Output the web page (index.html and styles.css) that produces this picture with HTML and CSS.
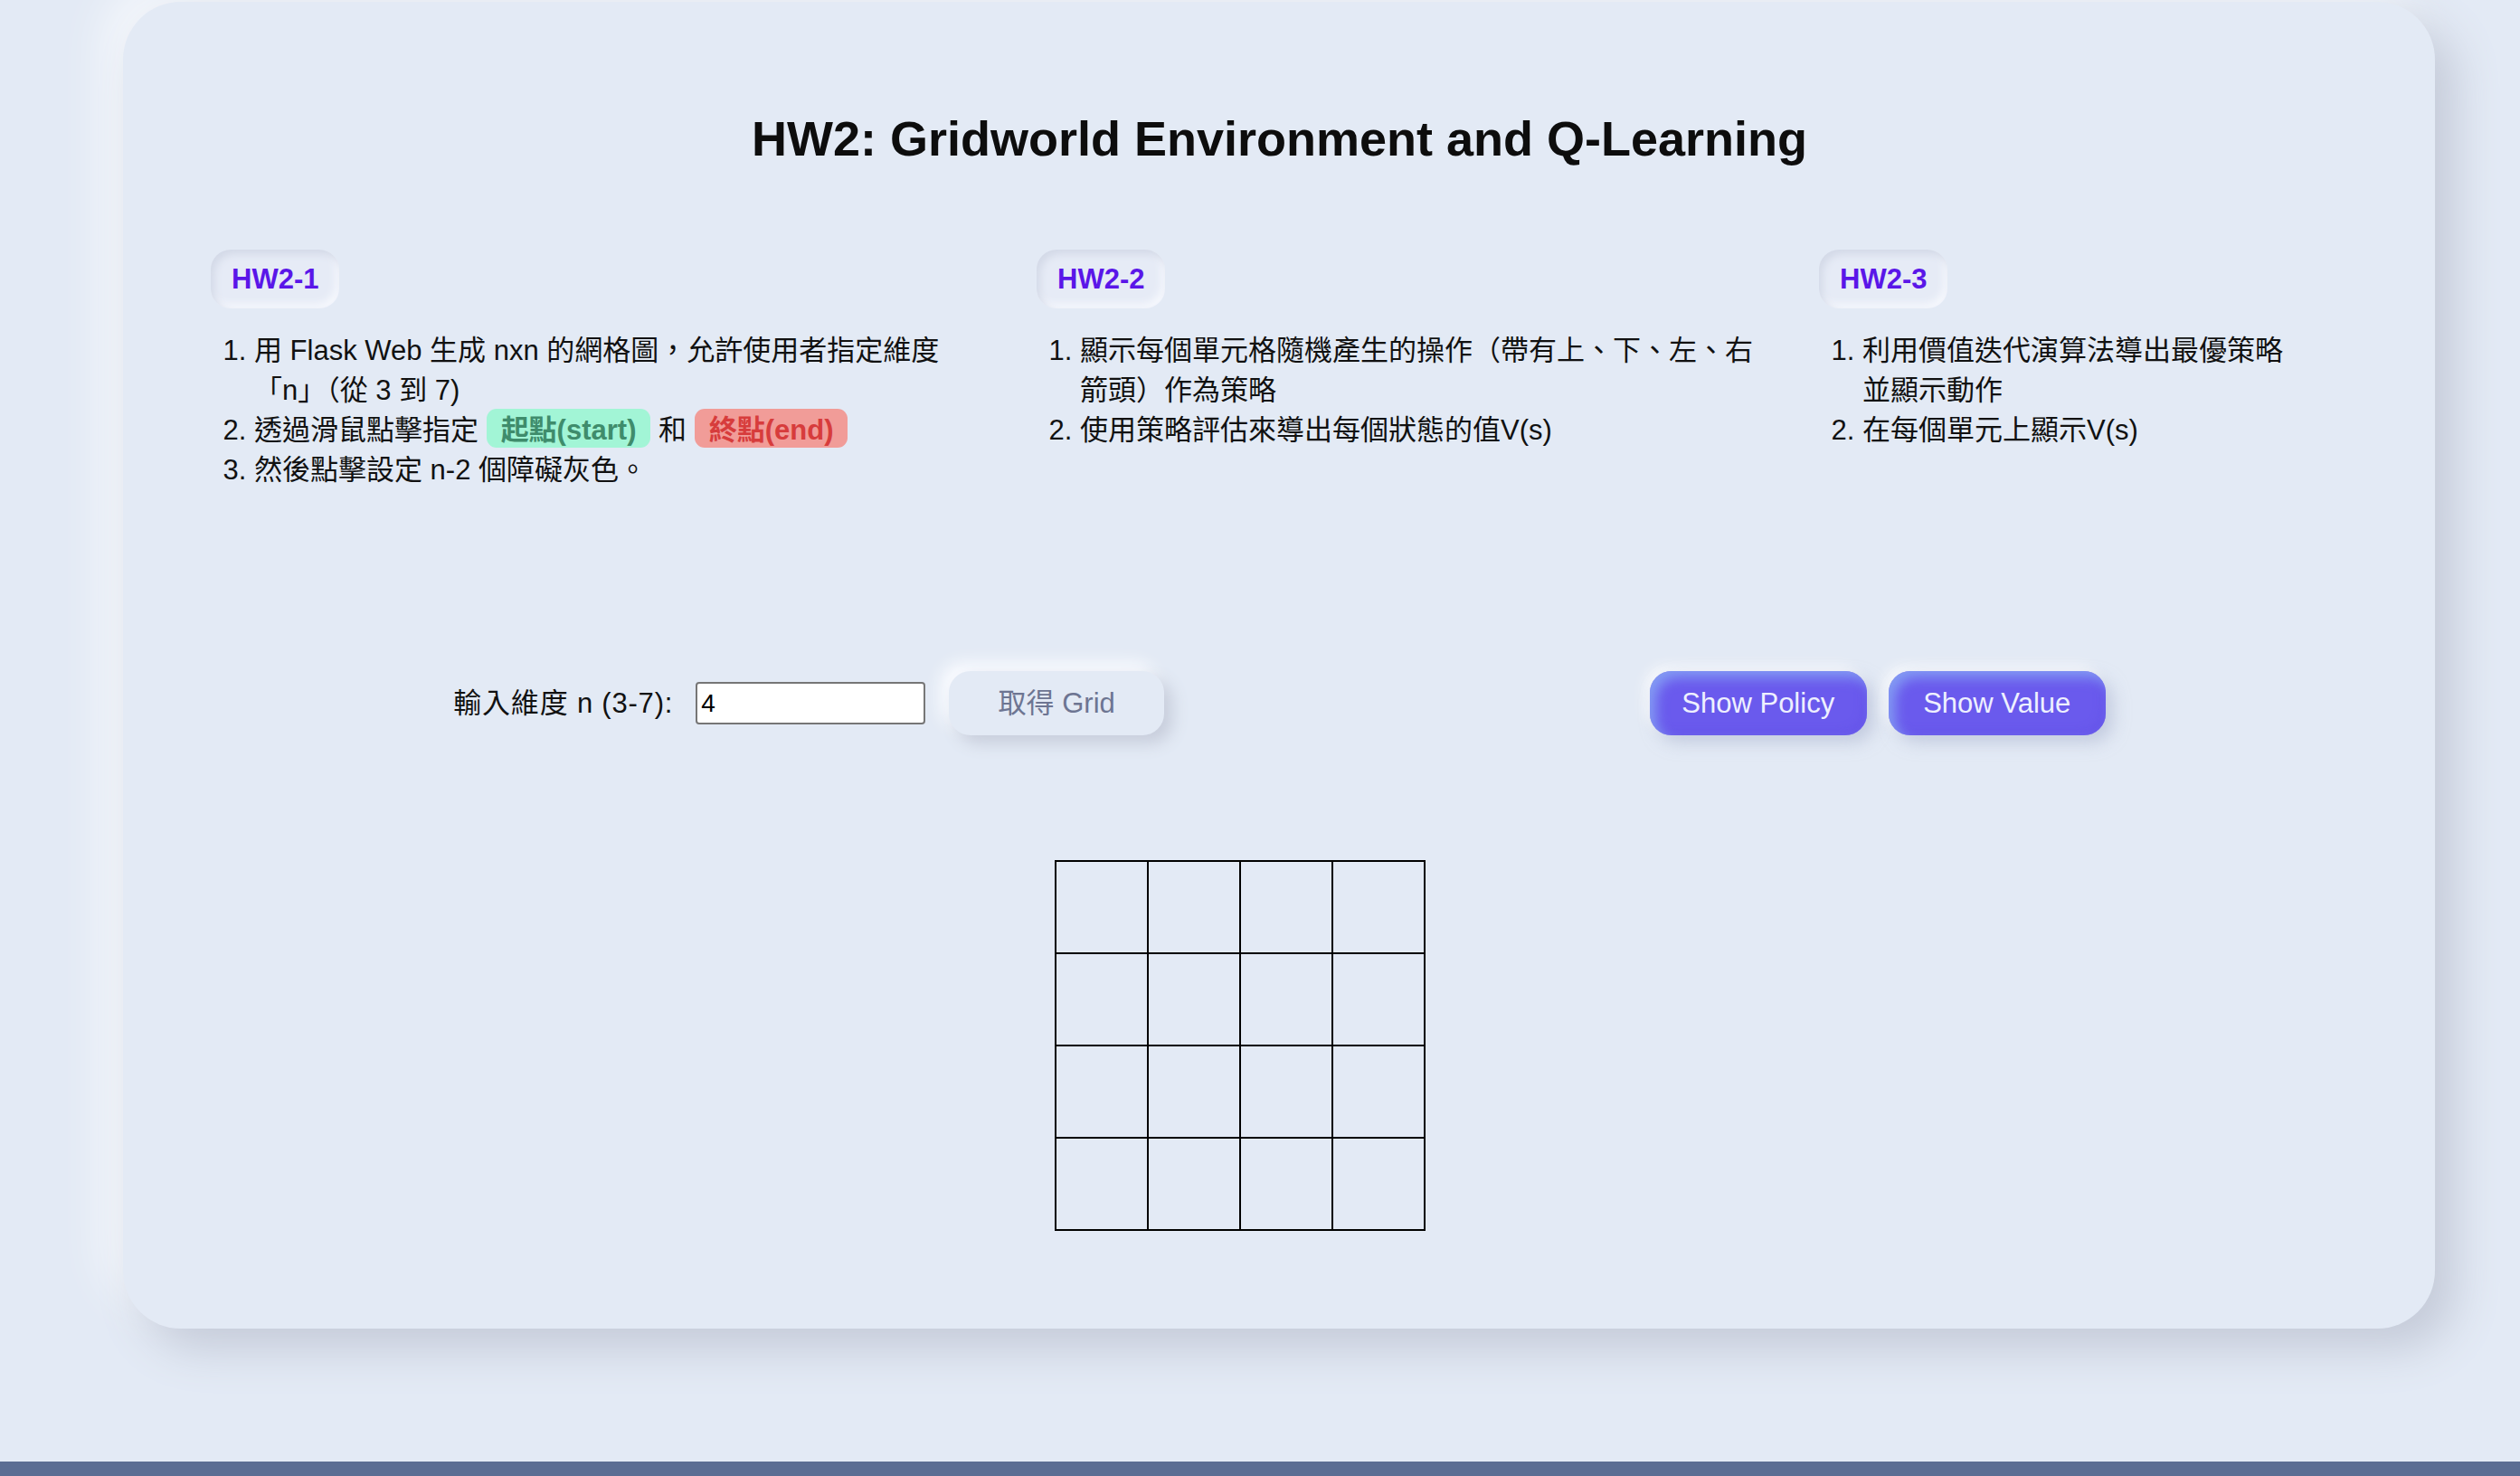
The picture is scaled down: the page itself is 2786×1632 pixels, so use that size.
FILE: index.html
```html
<!DOCTYPE html>
<html lang="zh-Hant">
<head>
<meta charset="utf-8">
<title>HW2: Gridworld Environment and Q-Learning</title>
<link rel="stylesheet" href="styles.css">
</head>
<body>
<main class="card">
  <h1 class="title">HW2: Gridworld Environment and Q-Learning</h1>
  <div class="sections">
    <section class="sec">
      <span class="badge">HW2-1</span>
      <ol class="steps">
        <li>用 Flask Web 生成 nxn 的網格圖，允許使用者指定維度「n」（從 3 到 7)</li>
        <li>透過滑鼠點擊指定 <span class="tag tag-start">起點(start)</span> 和 <span class="tag tag-end">終點(end)</span></li>
        <li>然後點擊設定 n-2 個障礙灰色。</li>
      </ol>
    </section>
    <section class="sec">
      <span class="badge">HW2-2</span>
      <ol class="steps">
        <li>顯示每個單元格隨機產生的操作（帶有上、下、左、右箭頭）作為策略</li>
        <li>使用策略評估來導出每個狀態的值V(s)</li>
      </ol>
    </section>
    <section class="sec">
      <span class="badge">HW2-3</span>
      <ol class="steps">
        <li>利用價值迭代演算法導出最優策略並顯示動作</li>
        <li>在每個單元上顯示V(s)</li>
      </ol>
    </section>
  </div>
  <div class="controls">
    <div class="group">
      <label class="dim-label" for="dim">輸入維度 n (3-7):</label>
      <input class="dim-input" id="dim" type="text" value="4">
      <button class="btn-soft" type="button">取得 Grid</button>
    </div>
    <div class="group group-actions">
      <button class="btn-primary" type="button">Show Policy</button>
      <button class="btn-primary" type="button">Show Value</button>
    </div>
  </div>
  <div class="grid-wrap">
    <div class="grid">
      <div class="cell"></div><div class="cell"></div><div class="cell"></div><div class="cell"></div>
      <div class="cell"></div><div class="cell"></div><div class="cell"></div><div class="cell"></div>
      <div class="cell"></div><div class="cell"></div><div class="cell"></div><div class="cell"></div>
      <div class="cell"></div><div class="cell"></div><div class="cell"></div><div class="cell"></div>
    </div>
  </div>
</main>
</body>
</html>
```
FILE: styles.css
```css
html {
  background: #5b6d93;
}

body {
  margin: 0;
  height: 1616px;
  background: #e3eaf5;
  font-family: "Liberation Sans", "Noto Sans CJK TC", sans-serif;
  font-size: 31px;
  line-height: 44px;
  color: #111;
}

.card {
  box-sizing: border-box;
  width: 2556px;
  margin: 2px 0 0 136px;
  padding: 119px 96px 108px 97px;
  background: #e3eaf5;
  border-radius: 64px;
  box-shadow: 22px 22px 50px #c4cad8, -22px -22px 50px rgba(255, 255, 255, 0.65);
}

.title {
  margin: 0;
  text-align: center;
  font-size: 54px;
  line-height: 64px;
  font-weight: 700;
  color: #0d0d0d;
}

.sections {
  margin-top: 91px;
  display: grid;
  grid-template-columns: 865px 817px 528px;
  column-gap: 48px;
  align-items: start;
}

.badge {
  display: inline-block;
  padding: 15px 23px;
  line-height: 35px;
  font-size: 31px;
  font-weight: 700;
  color: #5a16e8;
  border-radius: 22px;
  background: #e6ebf6;
  box-shadow: inset 4px 5px 9px #d3d9e7, inset -4px -5px 9px #f6f8fd;
}

.steps {
  margin: 25px 0 0;
  padding-left: 48px;
}

.tag {
  padding: 6px 16px 2px;
  border-radius: 11px;
  font-weight: 700;
}

.tag-start {
  background: #a2f5d6;
  color: #3f8c6c;
}

.tag-end {
  background: #f19c98;
  color: #d73c3c;
}

.controls {
  margin-top: 200px;
  display: flex;
  justify-content: space-around;
  align-items: center;
}

.group {
  display: flex;
  align-items: center;
}

.group-actions {
  gap: 24px;
}

.dim-label {
  margin-right: 25px;
  font-size: 31px;
  letter-spacing: 0.8px;
}

.dim-input {
  box-sizing: border-box;
  width: 254px;
  height: 47px;
  margin: 0 26px 0 0;
  padding: 0 4px;
  border: 2px solid #767676;
  border-radius: 4px;
  background: #fff;
  font-family: "Liberation Sans", sans-serif;
  font-size: 28px;
  color: #000;
}

.btn-soft,
.btn-primary {
  box-sizing: border-box;
  height: 71px;
  border: none;
  border-radius: 24px;
  font-family: "Liberation Sans", "Noto Sans CJK TC", sans-serif;
  font-size: 31px;
  line-height: 35px;
  padding: 0;
}

.btn-soft {
  width: 238px;
  background: #e3eaf5;
  color: #6d7592;
  box-shadow: 9px 9px 18px #c7cddb, -9px -9px 18px #fbfcff;
}

.btn-primary {
  width: 240px;
  background: #6a5aed;
  color: #eef0ff;
  box-shadow: inset 7px 7px 14px rgba(140, 178, 246, 0.75),
    inset -4px -4px 10px rgba(100, 80, 232, 0.6),
    8px 8px 18px rgba(170, 178, 205, 0.55),
    -6px -6px 14px rgba(255, 255, 255, 0.7);
}

.grid-wrap {
  margin-top: 138px;
  display: flex;
  justify-content: center;
  padding-right: 88px;
}

.grid {
  display: grid;
  grid-template-columns: repeat(4, 100px);
  grid-auto-rows: 100px;
  gap: 2px;
  padding: 2px;
  background: #000;
}

.cell {
  background: #e3eaf5;
}
```
